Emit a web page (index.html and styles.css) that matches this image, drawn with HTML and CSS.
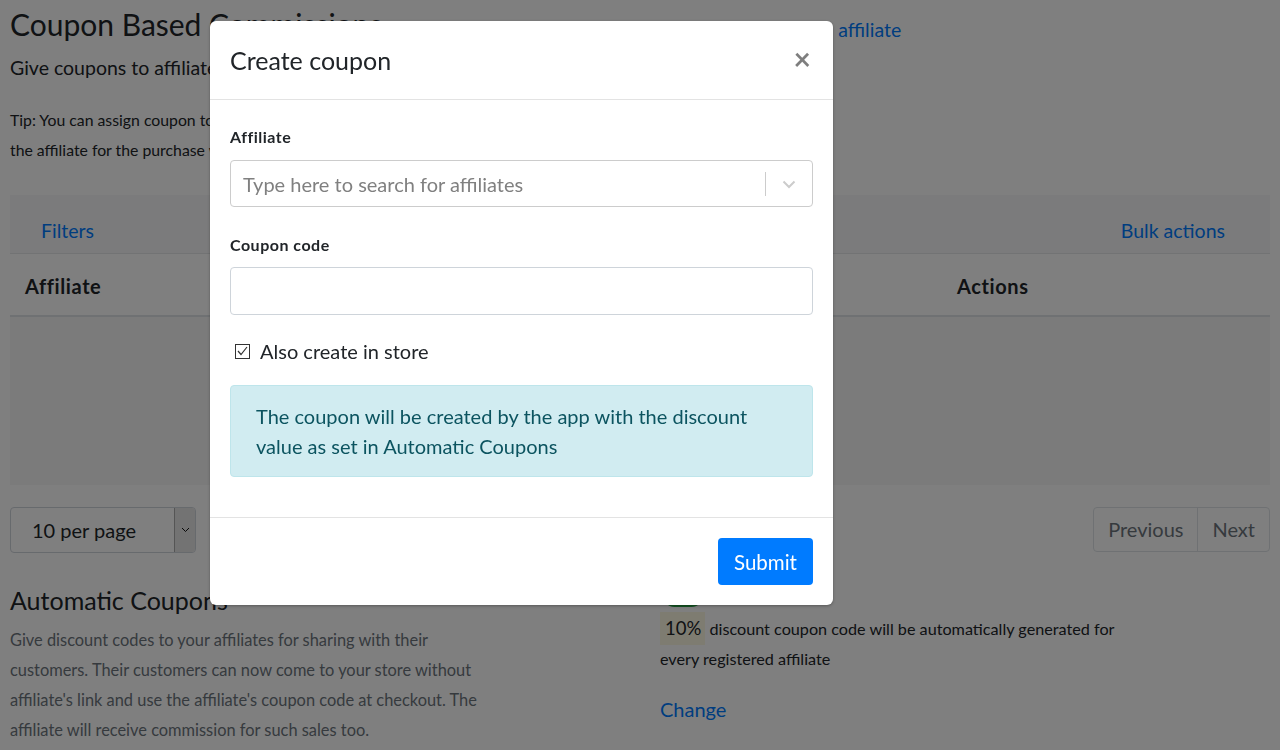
FILE: index.html
```html
<!DOCTYPE html>
<html lang="en">
<head>
<meta charset="utf-8">
<title>Coupon Based Commissions</title>
<link rel="stylesheet" href="styles.css">
</head>
<body>
<div class="page">
  <header class="page-head">
    <div class="intro">
      <h1 class="page-title">Coupon Based Commissions</h1>
      <p class="lead">Give coupons to affiliates and track their sales</p>
      <p class="tip">Tip: You can assign coupon to an affiliate and every time it is used,<br>the affiliate for the purchase will be credited with the commission.</p>
    </div>
    <div class="head-side">
      <a class="link add-link" href="#">Assign coupon to an affiliate</a>
    </div>
  </header>

  <section class="table-card">
    <div class="toolbar">
      <a class="link" href="#">Filters</a>
      <a class="link" href="#">Bulk actions</a>
    </div>
    <div class="thead">
      <span>Affiliate</span>
      <span>Actions</span>
    </div>
    <div class="tbody"></div>
  </section>

  <div class="pager">
    <div class="per-page">
      <span class="per-page-text">10 per page</span>
      <span class="per-page-btn">
        <svg width="9" height="6" viewBox="0 0 9 6"><path d="M1 1l3.5 3.5L8 1" fill="none" stroke="#111" stroke-width="1"/></svg>
      </span>
    </div>
    <div class="page-btns">
      <span class="page-btn">Previous</span>
      <span class="page-btn">Next</span>
    </div>
  </div>

  <section class="auto">
    <div class="auto-left">
      <h2 class="auto-title">Automatic Coupons</h2>
      <p class="auto-desc">Give discount codes to your affiliates for sharing with their customers. Their customers can now come to your store without affiliate's link and use the affiliate's coupon code at checkout. The affiliate will receive commission for such sales too.</p>
    </div>
    <div class="auto-right">
      <span class="toggle"><span class="knob"></span></span>
      <p class="auto-text"><mark class="pct">10%</mark> discount coupon code will be automatically generated for every registered affiliate</p>
      <a class="link change" href="#">Change</a>
    </div>
  </section>
</div>

<div class="backdrop"></div>

<div class="modal">
  <div class="modal-header">
    <h5 class="modal-title">Create coupon</h5>
    <span class="close">&times;</span>
  </div>
  <div class="modal-body">
    <div class="form-group">
      <label class="form-label">Affiliate</label>
      <div class="select">
        <span class="placeholder">Type here to search for affiliates</span>
        <span class="sep"></span>
        <svg class="chev" width="20" height="20" viewBox="0 0 20 20"><path d="M4.5 7.5l5.5 5.5 5.5-5.5" fill="none" stroke="#cccccc" stroke-width="2"/></svg>
      </div>
    </div>
    <div class="form-group">
      <label class="form-label">Coupon code</label>
      <div class="input"></div>
    </div>
    <div class="check-row">
      <span class="checkbox">
        <svg width="11" height="10" viewBox="0 0 11 10"><path d="M1 5l3 3.5L10 1" fill="none" stroke="#333" stroke-width="1.2"/></svg>
      </span>
      <span>Also create in store</span>
    </div>
    <div class="alert">The coupon will be created by the app with the discount value as set in Automatic Coupons</div>
  </div>
  <div class="modal-footer">
    <button class="btn-primary" type="button">Submit</button>
  </div>
</div>
</body>
</html>
```

FILE: styles.css
```css
* { box-sizing: border-box; }
html, body { margin: 0; padding: 0; }
body {
  font-family: Lato, "Noto Sans", sans-serif;
  color: #212529;
  background: #ffffff;
  width: 1280px;
  height: 750px;
  overflow: hidden;
}
p { margin: 0; }
.link { color: #007bff; text-decoration: none; }

.page { padding: 6px 10px 0 10px; }

.page-head {
  display: grid;
  grid-template-columns: 500px 480px;
  column-gap: 150px;
}
.page-title {
  font-size: 30px;
  font-weight: 400;
  line-height: 36px;
  margin: 0;
  white-space: nowrap;
}
.lead { font-size: 19.5px; line-height: 24px; margin-top: 14px; white-space: nowrap; }
.tip { font-size: 15.8px; line-height: 30px; margin-top: 25px; white-space: nowrap; }
.head-side { padding-top: 12px; }
.add-link { font-size: 19.5px; line-height: 24px; }

.table-card { margin-top: 30px; }
.toolbar {
  display: flex;
  justify-content: space-between;
  background: #f6f7f9;
  padding: 21px 45px 7px 31px;
  line-height: 30px;
  font-size: 19.5px;
  border-bottom: 1px solid #e4e6e9;
}
.thead {
  display: grid;
  grid-template-columns: 1fr 298px;
  padding: 17px 15px 14px 15px;
  line-height: 30px;
  font-size: 20px;
  letter-spacing: 0.6px;
  font-weight: 700;
  border-bottom: 2px solid #dee2e6;
}
.tbody { height: 168px; background: #f6f6f6; }

.pager {
  display: flex;
  justify-content: space-between;
  margin-top: 22px;
}
.per-page {
  display: flex;
  width: 186px;
  height: 46px;
  border: 1px solid #ced4da;
  border-radius: 4px;
  overflow: hidden;
}
.per-page-text {
  flex: 1;
  font-size: 20px;
  line-height: 44px;
  padding-left: 21px;
  color: #212529;
}
.per-page-btn {
  width: 21px;
  background: #e6e6e6;
  border-left: 1px solid #aaaaaa;
  display: flex;
  align-items: center;
  justify-content: center;
}
.page-btns {
  display: flex;
  border: 1px solid #dee2e6;
  border-radius: 4px;
  height: 45px;
}
.page-btn {
  font-size: 20px;
  line-height: 43px;
  padding: 0 14px;
  color: #6c757d;
}
.page-btn + .page-btn { border-left: 1px solid #dee2e6; }

.auto {
  display: grid;
  grid-template-columns: 500px 480px;
  column-gap: 150px;
  margin-top: 29px;
}
.auto-title { font-size: 25px; font-weight: 400; line-height: 36px; margin: 0 0 7px; }
.auto-desc { font-size: 16.4px; line-height: 30px; color: #6c757d; }
.toggle {
  display: block;
  width: 42px;
  height: 25px;
  margin-left: 2px;
  background: #28a745;
  border-radius: 13px;
  position: relative;
}
.knob {
  position: absolute;
  right: 3px;
  top: 3px;
  width: 19px;
  height: 19px;
  border-radius: 50%;
  background: #fff;
}
.auto-text { font-size: 16.2px; line-height: 30px; margin-top: 7px; }
.pct {
  display: inline-block;
  background: #fcf8e3;
  color: #212529;
  font-size: 18.5px;
  line-height: 33px;
  padding: 0 4px 0 5px;
  margin: -2px 0 -1px 0;
  vertical-align: top;
}
.change { display: block; font-size: 20px; line-height: 30px; margin-top: 20px; }

.backdrop {
  position: fixed;
  inset: 0;
  background: rgba(0, 0, 0, 0.5);
}

.modal {
  position: absolute;
  left: 210px;
  top: 21px;
  width: 623px;
  background: #fff;
  border-radius: 6px;
  box-shadow: 0 1px 3px rgba(0, 0, 0, 0.3);
}
.modal-header {
  display: flex;
  justify-content: space-between;
  align-items: center;
  padding: 20px 20px 20px 20px;
  border-bottom: 1px solid #e3e3e3;
}
.modal-title { margin: 0; font-size: 25px; font-weight: 400; line-height: 38px; }
.close { font-size: 30px; font-weight: 700; color: #000; opacity: 0.5; line-height: 30px; margin: -5px 2px 0 0; }

.modal-body { padding: 26px 20px 40px 20px; }
.form-group { margin-bottom: 27px; }
.form-label { display: block; font-size: 16px; letter-spacing: 0.5px; font-weight: 700; line-height: 22px; margin-bottom: 12px; }
.form-group + .form-group .form-label { margin-bottom: 11px; }
.select {
  display: flex;
  align-items: center;
  height: 47px;
  border: 1px solid #cccccc;
  border-radius: 4px;
  padding-left: 12px;
}
.placeholder { flex: 1; font-size: 20px; color: #808080; }
.sep { width: 1px; height: 24px; background: #cccccc; }
.chev { margin: 0 13px 0 13px; }
.input {
  height: 48px;
  border: 1px solid #ced4da;
  border-radius: 4px;
}
.form-group:nth-child(2) { margin-bottom: 21px; }
.check-row {
  display: flex;
  align-items: center;
  font-size: 20px;
  line-height: 30px;
  padding-left: 5px;
  margin-bottom: 19px;
}
.checkbox {
  width: 15px;
  height: 15px;
  border: 1px solid #333;
  margin-right: 10px;
  display: flex;
  align-items: center;
  justify-content: center;
}
.alert {
  background: #d1ecf1;
  border: 1px solid #bee5eb;
  color: #0c5460;
  border-radius: 4px;
  padding: 15px 25px;
  font-size: 20px;
  line-height: 30px;
}
.modal-footer {
  display: flex;
  justify-content: flex-end;
  padding: 20px;
  border-top: 1px solid #e3e3e3;
}
.btn-primary {
  background: #007bff;
  color: #fff;
  border: 0;
  border-radius: 4px;
  font-family: inherit;
  font-size: 20.5px;
  height: 47px;
  width: 95px;
  padding: 0;
}
```
